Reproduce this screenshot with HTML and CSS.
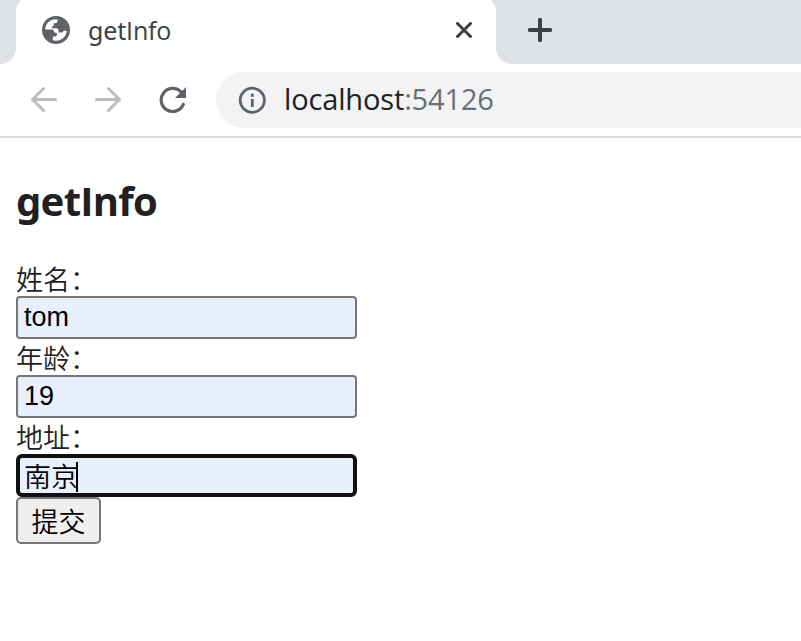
FILE: index.html
```html
<!DOCTYPE html>
<html lang="zh-CN">
<head>
<meta charset="utf-8">
<title>getInfo</title>
<link rel="stylesheet" href="styles.css">
</head>
<body>
<header class="tabstrip">
  <div class="edge edge-left"></div>
  <div class="tab">
    <svg class="globe" viewBox="0 0 28 28"><circle cx="14" cy="14" r="14" fill="#5f6368"/><path fill="#fff" d="M3.2 13.6C3.2 7.8 8 3.2 13.8 3.2L15.6 3.4V4.6C15.6 6.4 14.6 7.2 12.8 7.2H11.6V9.3C11.6 10.2 11 10.7 9.8 10.8V12.2H14C15.8 12.2 16.6 13.2 16.6 15V16.6H19C20.6 16.6 21 15.8 21.6 14.8H24.7C24.5 20.4 20 24.7 14 24.7L10.8 24.2V20.6H13C14.3 20.6 14.9 19.8 14.9 18.4V17C12.8 17 11.8 16.2 11.8 14.8L10.6 13.6Z"/></svg>
    <span class="tab-title"><span class="lead">get</span>Info</span>
    <svg class="close" viewBox="0 0 16 16"><path d="M1.5 1.5l13 13M14.5 1.5l-13 13"/></svg>
  </div>
  <div class="edge edge-right">
    <svg class="plus" viewBox="0 0 24 24"><path d="M12 1.8v20.4M1.8 12h20.4"/></svg>
  </div>
</header>
<nav class="toolbar">
  <svg class="nav arrow" viewBox="0 0 28 28"><path d="M25.5 13.5H3M13.5 2.5L2.5 13.5L13.5 24.5"/></svg>
  <svg class="nav arrow" viewBox="0 0 28 28"><path d="M2.5 13.5h22M14.5 2.5L25.5 13.5L14.5 24.5"/></svg>
  <svg class="nav reload" viewBox="0 0 28 28"><path class="arc" d="M25.3 18.4A11.5 11.5 0 1 1 23.2 6.2"/><path class="head" d="M28 1v11H17z"/></svg>
  <div class="address">
    <svg class="info" viewBox="0 0 28 28"><circle cx="14.3" cy="14.3" r="12.1"/><path d="M14.3 13v8M14.3 7.7v3"/></svg>
    <span class="url">localhost<span class="port">:54126</span></span>
  </div>
</nav>
<main>
  <h2><span class="lead">get</span>Info</h2>
  <form>
    <label for="name">姓名：</label>
    <input id="name" type="text" value="tom">
    <label for="age">年龄：</label>
    <input id="age" type="text" value="19">
    <label for="address">地址：</label>
    <div class="field">
      <input id="address" class="active" type="text" value="南京">
      <span class="caret"></span>
    </div>
    <button type="button">提交</button>
  </form>
</main>
</body>
</html>
```
FILE: styles.css
```css
* { box-sizing: border-box; }
body {
  margin: 0;
  height: 641px;
  overflow: hidden;
  background: #fff;
  color: #212121;
  font-family: "Open Sans", "Noto Sans CJK SC", sans-serif;
}
svg { display: block; flex: none; fill: none; }
.lead { font-family: "Noto Sans", sans-serif; }
.tabstrip {
  display: flex;
  height: 64px;
  background: linear-gradient(#dee1e6 0 32px, #fff 32px);
}
.edge { background: #dee1e6; }
.edge-left { width: 16px; border-bottom-right-radius: 16px; }
.edge-right { flex: 1; border-bottom-left-radius: 16px; padding: 18px 0 0 32px; }
.tab {
  display: flex;
  align-items: center;
  width: 480px;
  height: 68px;
  margin-top: -4px;
  padding: 0 24px 0 26px;
  background: #fff;
  border-radius: 16px 16px 0 0;
}
.globe { width: 28px; height: 28px; }
.tab-title { margin-left: 18px; font-size: 25px; line-height: 34px; letter-spacing: -0.15px; color: #3c4043; }
.close { width: 16px; height: 16px; margin-left: auto; stroke: #3c4043; stroke-width: 3; stroke-linecap: round; }
.plus { width: 24px; height: 24px; stroke: #3c4043; stroke-width: 4; stroke-linecap: round; }
.toolbar {
  display: flex;
  align-items: center;
  height: 74px;
  padding: 0 0 0 30px;
  border-bottom: 2px solid #dadce0;
}
.nav { width: 28px; height: 28px; margin-right: 36px; }
.arrow { stroke: #babcbe; stroke-width: 3; stroke-linecap: round; stroke-linejoin: round; }
.reload { margin-right: 30px; }
.arc { stroke: #5f6368; stroke-width: 3.2; stroke-linecap: round; }
.head { fill: #5f6368; }
.address {
  display: flex;
  align-items: center;
  flex: 1;
  height: 56px;
  padding-left: 22px;
  background: #f1f3f4;
  border-radius: 28px 0 0 28px;
}
.info { width: 28px; height: 28px; stroke: #5f6368; stroke-width: 2.8; }
.url { margin-left: 18px; padding-bottom: 2px; font-size: 29px; line-height: 40px; letter-spacing: -0.15px; color: #202124; }
.port { color: #6b6e72; }
main { padding: 37px 16px 0; }
h2 { margin: 0; font-size: 40px; line-height: 52px; font-weight: 700; letter-spacing: -0.75px; }
form { display: flex; flex-direction: column; align-items: flex-start; padding-top: 33px; }
label { height: 36px; font-size: 27px; line-height: 38px; font-family: "Noto Sans CJK SC", sans-serif; font-weight: 350; }
input {
  display: block;
  width: 341px;
  height: 43px;
  margin: 0;
  padding: 0 6px 1px;
  border: 2px solid #767676;
  border-radius: 4px;
  outline: none;
  background: #e8f0fe;
  color: #000;
  font: 350 27px "Liberation Sans", "Noto Sans CJK SC", sans-serif;
}
.field { position: relative; }
.active { border: 4px solid #101010; border-radius: 6px; padding: 0 4px; }
.caret { position: absolute; left: 60px; top: 8px; width: 2px; height: 30px; background: #000; }
button {
  width: 85px;
  height: 47px;
  padding: 0;
  border: 2px solid #767676;
  border-radius: 5px;
  background: #efefef;
  color: #000;
  font: 350 27px "Noto Sans CJK SC", sans-serif;
  line-height: 40px;
}
```
